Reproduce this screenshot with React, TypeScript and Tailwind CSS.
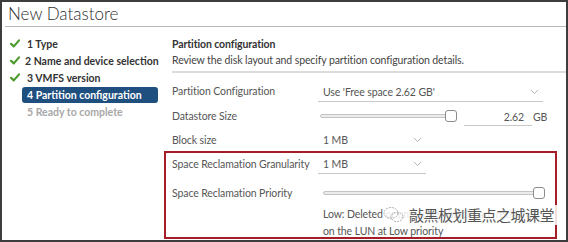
import React from "react";

const font = "font-['Lato','Noto_Sans_CJK_SC',sans-serif]";

function Check() {
  return (
    <svg width="10" height="9" viewBox="0 0 10 9" className="shrink-0">
      <path d="M1 4.8 L3.8 7.4 L9 1.4" fill="none" stroke="#4b9a2c" strokeWidth="2.2" strokeLinecap="round" strokeLinejoin="round" />
    </svg>
  );
}

function Chevron() {
  return (
    <svg width="9" height="6" viewBox="0 0 9 6">
      <path d="M1 1 L4.5 4.5 L8 1" fill="none" stroke="#b4b4b4" strokeWidth="1" />
    </svg>
  );
}

function Slider({ width, thumbAt }: { width: number; thumbAt: number }) {
  return (
    <div className="relative h-[12px]" style={{ width }}>
      <div className="absolute left-0 top-[4px] h-[4px] rounded-full border border-[#c4c4c4] bg-[#ebebeb]" style={{ width: thumbAt + 2 }} />
      <div className="absolute top-0 h-[12px] w-[12px] rounded-[3px] border border-[#8c8c8c] bg-white" style={{ left: thumbAt }} />
    </div>
  );
}

function NavItem({ n, done, active, muted }: { n: string; done?: boolean; active?: boolean; muted?: boolean }) {
  return (
    <div className="flex h-[17px] items-center">
      <div className="flex w-[12px] items-center">{done ? <Check /> : null}</div>
      <div
        className={`flex h-[16px] flex-1 items-center whitespace-nowrap rounded-[3px] px-[5px] text-[10.5px] font-bold leading-[16px] ${
          active ? "bg-[#1e4f7f] text-white" : muted ? "text-[#a8a8a8]" : "text-[#333]"
        }`}
      >
        {n}
      </div>
    </div>
  );
}

export default function App() {
  return (
    <div className={`${font} relative flex h-[242px] w-[568px] flex-col overflow-hidden border-2 border-[#3d3d3d] bg-white`}>
      <div className="ml-[3px] h-[25px] border-b border-[#b8b8b8] pl-[3px] pt-[1px] text-[17px] font-light leading-[22px] text-[#2e2e2e]">
        New Datastore
      </div>
      <div className="flex flex-1">
        <div className="w-[156px] pl-[8px] pt-[8px]">
          <NavItem n="1 Type" done />
          <NavItem n="2 Name and device selection" done />
          <NavItem n="3 VMFS version" done />
          <NavItem n="4 Partition configuration" active />
          <NavItem n="5 Ready to complete" muted />
        </div>
        <div className="flex-1 whitespace-nowrap pl-[14px] pt-[9px] text-[10.5px] leading-[16px] tracking-[-0.1px] text-[#565656]">
          <div className="font-bold text-[#333]">Partition configuration</div>
          <div className="text-[#444]">Review the disk layout and specify partition configuration details.</div>
          <div className="mt-[3px] h-[2px] bg-[#dcdcdc]" />
          <div className="mt-[6px] flex h-[24px] items-center">
            <div className="w-[146px]">Partition Configuration</div>
            <div className="flex h-[22px] w-[225px] items-center justify-between border-b border-[#c8c8c8] pl-[5px] pr-[4px] pt-[2px]">
              <span>Use 'Free space 2.62 GB'</span>
              <Chevron />
            </div>
          </div>
          <div className="flex h-[26px] items-center">
            <div className="w-[148px]">Datastore Size</div>
            <Slider width={138} thumbAt={125} />
            <div className="ml-[6px] flex h-[20px] w-[68px] items-center justify-end border-b border-[#c8c8c8] pr-[8px] pt-[2px]">2.62</div>
            <div className="ml-[1px] pt-[1px]">GB</div>
          </div>
          <div className="flex h-[22px] items-center">
            <div className="w-[146px]">Block size</div>
            <div className="flex h-[20px] w-[108px] items-center justify-between pl-[5px] pr-[4px]">
              <span>1 MB</span>
              <Chevron />
            </div>
          </div>
          <div className="-ml-[8px] mr-[9px] h-[88px] border-2 border-[#a51d27] pl-[6px]">
            <div className="flex h-[22px] items-center">
              <div className="w-[146px]">Space Reclamation Granularity</div>
              <div className="flex h-[20px] w-[108px] items-center justify-between border-b border-[#c8c8c8] pl-[5px] pr-[4px] pt-[1px]">
                <span>1 MB</span>
                <Chevron />
              </div>
            </div>
            <div className="flex pt-[10px]">
              <div className="w-[151px]">Space Reclamation Priority</div>
              <div className="pt-[2px]">
                <Slider width={223} thumbAt={210} />
              </div>
            </div>
            <div className="ml-[151px] mt-[5px] leading-[17px]">
              <div>Low: Deleted or unmapped blocks are reclaimed</div>
              <div>on the LUN at Low priority</div>
            </div>
          </div>
        </div>
      </div>
      <div className="absolute left-[381px] top-[203px] flex items-center gap-[4px] bg-white/85 pr-[8px]">
        <svg width="22" height="18" viewBox="0 0 22 18">
          <ellipse cx="8" cy="7" rx="7" ry="5.5" fill="none" stroke="#9a9a9a" strokeWidth="0.8" strokeDasharray="2 1" />
          <ellipse cx="14" cy="11" rx="6" ry="4.6" fill="none" stroke="#9a9a9a" strokeWidth="0.8" strokeDasharray="2 1" />
        </svg>
        <span className="font-['Noto_Sans_CJK_SC',sans-serif] text-[15px] leading-[20px] tracking-[-0.5px] text-[#555]">敲黑板划重点之城课堂</span>
      </div>
    </div>
  );
}
